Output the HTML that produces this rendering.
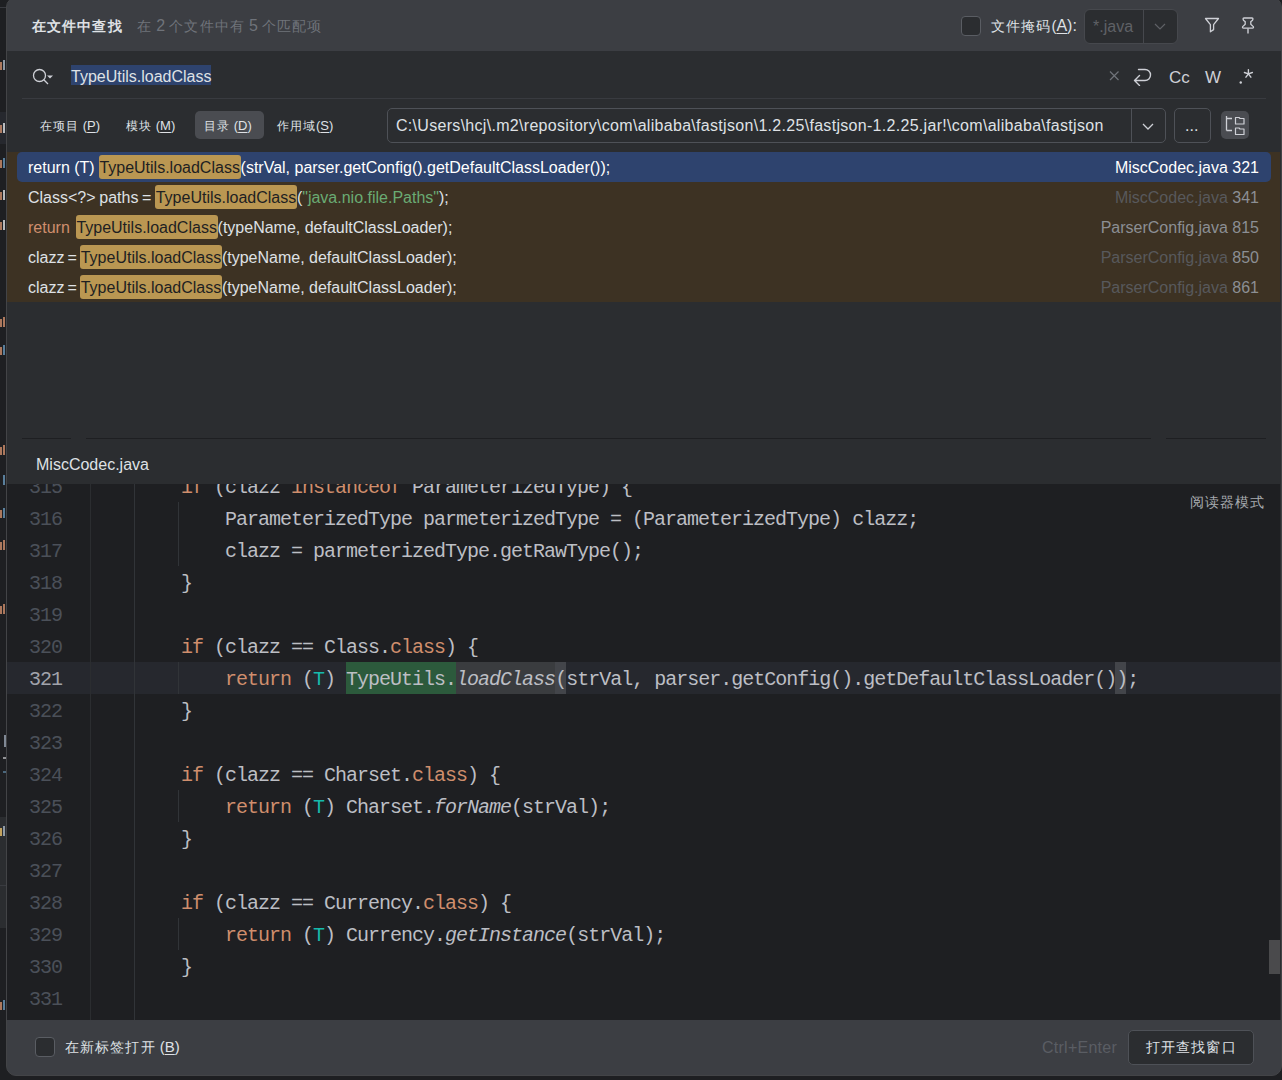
<!DOCTYPE html><html><head><meta charset="utf-8"><style>
*{box-sizing:border-box;margin:0;padding:0}
html,body{width:1282px;height:1080px;overflow:hidden;background:#1E1F22;font-family:"Liberation Sans",sans-serif;color:#DFE1E5}
.a{position:absolute}
.t{position:absolute;white-space:pre;font-size:16px;line-height:20px}
.cn{font-size:0.92em;letter-spacing:0.08em}
.code{position:absolute;left:137px;white-space:pre;font-family:"Liberation Mono",monospace;font-size:20px;letter-spacing:-1px;line-height:32px;height:32px;color:#BCBEC4;padding-top:2px}
.kw{color:#CF8E6D}
.tp{color:#16BAAC}
.it{font-style:italic}
.ln{position:absolute;left:20px;width:42px;text-align:right;white-space:pre;font-family:"Liberation Mono",monospace;font-size:20px;letter-spacing:-1px;line-height:32px;color:#4B5059;padding-top:2px}
.hl{background:#BA9752;color:#1E1F22;border-radius:3px;padding:4px 0.7px 2.7px}
.u{text-decoration:underline;text-underline-offset:2px}
.fn{position:absolute;right:23px;white-space:pre;font-size:16px;line-height:20px;text-align:right}
.gd{position:absolute;width:1px;background:#313438}
</style></head><body>
<div class="a" style="left:0;top:7px;width:7px;height:1px;background:#393B40"></div>
<div class="a" style="left:1281px;top:7px;width:1px;height:1px;background:#393B40"></div>
<div class="a" style="left:4px;top:735px;width:2px;height:12px;background:#A9B7C6;opacity:.7"></div>
<div class="a" style="left:3px;top:757px;width:3px;height:2px;background:#DFE1E5;opacity:.6"></div>
<div class="a" style="left:3px;top:771px;width:3px;height:2px;background:#6897BB;opacity:.6"></div>
<div class="a" style="left:0;top:112px;width:6px;height:32px;background:#26282E"></div>
<div class="a" style="left:0;top:817px;width:6px;height:111px;background:#2B2D30"></div>
<div class="a" style="left:0;top:885px;width:6px;height:1px;background:#393B40"></div>
<div class="a" style="left:0;top:62px;width:2px;height:8px;background:#CF8E6D;opacity:.8"></div>
<div class="a" style="left:3px;top:60px;width:2px;height:10px;background:#A9B7C6;opacity:.8"></div>
<div class="a" style="left:0;top:125px;width:2px;height:8px;background:#CF8E6D;opacity:.8"></div>
<div class="a" style="left:3px;top:123px;width:2px;height:10px;background:#DFE1E5;opacity:.8"></div>
<div class="a" style="left:0;top:160px;width:2px;height:8px;background:#CF8E6D;opacity:.8"></div>
<div class="a" style="left:3px;top:158px;width:2px;height:10px;background:#6897BB;opacity:.8"></div>
<div class="a" style="left:0;top:192px;width:2px;height:8px;background:#CF8E6D;opacity:.8"></div>
<div class="a" style="left:3px;top:190px;width:2px;height:10px;background:#DFE1E5;opacity:.8"></div>
<div class="a" style="left:0;top:222px;width:2px;height:8px;background:#CF8E6D;opacity:.8"></div>
<div class="a" style="left:3px;top:220px;width:2px;height:10px;background:#DFE1E5;opacity:.8"></div>
<div class="a" style="left:0;top:319px;width:2px;height:8px;background:#CF8E6D;opacity:.8"></div>
<div class="a" style="left:3px;top:317px;width:2px;height:10px;background:#CF8E6D;opacity:.8"></div>
<div class="a" style="left:0;top:347px;width:2px;height:8px;background:#CF8E6D;opacity:.8"></div>
<div class="a" style="left:3px;top:345px;width:2px;height:10px;background:#6897BB;opacity:.8"></div>
<div class="a" style="left:0;top:447px;width:2px;height:8px;background:#CF8E6D;opacity:.8"></div>
<div class="a" style="left:3px;top:445px;width:2px;height:10px;background:#CF8E6D;opacity:.8"></div>
<div class="a" style="left:3px;top:475px;width:2px;height:10px;background:#6897BB;opacity:.8"></div>
<div class="a" style="left:0;top:510px;width:2px;height:8px;background:#CF8E6D;opacity:.8"></div>
<div class="a" style="left:3px;top:508px;width:2px;height:10px;background:#6897BB;opacity:.8"></div>
<div class="a" style="left:0;top:542px;width:2px;height:8px;background:#CF8E6D;opacity:.8"></div>
<div class="a" style="left:3px;top:540px;width:2px;height:10px;background:#CF8E6D;opacity:.8"></div>
<div class="a" style="left:0;top:606px;width:2px;height:8px;background:#CF8E6D;opacity:.8"></div>
<div class="a" style="left:3px;top:604px;width:2px;height:10px;background:#CF8E6D;opacity:.8"></div>
<div class="a" style="left:0;top:828px;width:2px;height:8px;background:#E8BF6A;opacity:.8"></div>
<div class="a" style="left:3px;top:826px;width:2px;height:10px;background:#A9B7C6;opacity:.8"></div>
<div class="a" style="left:0;top:1002px;width:2px;height:8px;background:#CF8E6D;opacity:.8"></div>
<div class="a" style="left:3px;top:1000px;width:2px;height:10px;background:#6897BB;opacity:.8"></div>
<div class="a" style="left:6px;top:-3px;width:1276px;height:1079px;border-radius:10px;background:#3C3E43;border:1px solid #434447"></div>
<div class="a" style="left:7px;top:51px;width:1274px;height:969px;background:#2B2D30"></div>
<div class="t" style="left:32px;top:16px;font-weight:bold;font-size:15px"><span class="cn">在文件中查找</span></div>
<div class="t" style="left:137px;top:16px;color:#6F737A;font-size:15px"><span class="cn">在</span> <span style="font-size:16px">2</span> <span class="cn">个文件中有</span> <span style="font-size:16px">5</span> <span class="cn">个匹配项</span></div>
<div class="a" style="left:961px;top:16px;width:20px;height:20px;border-radius:4px;border:1px solid #5A5D63;background:#2B2D30"></div>
<div class="t" style="left:991px;top:16px;font-size:15px"><span class="cn">文件掩码</span>(<span class="u" style="font-size:16px">A</span><span style="font-size:16px">):</span></div>
<div class="a" style="left:1084px;top:9px;width:94px;height:35px;border-radius:6px;border:1px solid #46484D;background:#2B2D30"></div>
<div class="a" style="left:1143px;top:10px;width:1px;height:33px;background:#46484D"></div>
<div class="t" style="left:1093px;top:17px;color:#5F6166">*.java</div>
<svg class="a" style="left:1153px;top:22px" width="14" height="10"><path d="M2 2 L7 7 L12 2" stroke="#5F6166" stroke-width="1.2" fill="none"/></svg>
<svg class="a" style="left:1203px;top:16px" width="18" height="18"><path d="M2.5 2.5 H15.5 L10.6 8.7 V13.6 L7.4 15.8 V8.7 Z" stroke="#CED0D6" stroke-width="1.3" fill="none" stroke-linejoin="round"/></svg>
<svg class="a" style="left:1240px;top:14px" width="18" height="22"><path d="M4 4 H12 Q13 4 13 5 Q13 6.5 10.8 7.6 V10.2 L13.3 12.6 Q14 14.2 12.4 14.2 H3.6 Q2 14.2 2.7 12.6 L5.2 10.2 V7.6 Q3 6.5 3 5 Q3 4 4 4 Z" stroke="#CED0D6" stroke-width="1.3" fill="none" stroke-linejoin="round"/><path d="M8 14.5 V19.6" stroke="#CED0D6" stroke-width="1.4"/></svg>
<svg class="a" style="left:30px;top:64.5px" width="26" height="24"><circle cx="9.5" cy="10.5" r="6" stroke="#CED0D6" stroke-width="1.3" fill="none"/><path d="M13.8 14.8 L18 19" stroke="#CED0D6" stroke-width="1.3"/><path d="M17 10.5 H23 L20 13.5 Z" fill="#CED0D6"/></svg>
<div class="a" style="left:71px;top:65px;width:140px;height:20px;background:#2E436E"></div>
<div class="t" style="left:71px;top:66.5px;color:#DFE1E5">TypeUtils.loadClass</div>
<svg class="a" style="left:1106px;top:68px" width="16" height="16"><path d="M4 3.5 L12.5 12 M12.5 3.5 L4 12" stroke="#6F737A" stroke-width="1.2"/></svg>
<svg class="a" style="left:1131px;top:66px" width="22" height="20"><path d="M7.5 3.5 H14 A5.5 5.5 0 0 1 14 14.5 H3.5 M8.5 9.5 L3.5 14.5 L8.5 19.5" stroke="#CED0D6" stroke-width="1.4" fill="none" stroke-linejoin="round" stroke-linecap="round"/></svg>
<div class="t" style="left:1169px;top:68px;color:#CED0D6;font-size:17px">Cc</div>
<div class="t" style="left:1205px;top:68px;color:#CED0D6;font-size:17px">W</div>
<svg class="a" style="left:1236px;top:66px" width="20" height="20"><circle cx="4.75" cy="16.5" r="1.2" fill="#CED0D6"/><path transform="translate(12.4 7.8)" d="M0 0 L0.00 -4.20 M0 0 L3.99 -1.30 M0 0 L2.47 3.40 M0 0 L-2.47 3.40 M0 0 L-3.99 -1.30" stroke="#CED0D6" stroke-width="1.4" stroke-linecap="round"/></svg>
<div class="a" style="left:22px;top:98px;width:1244px;height:1px;background:#393B40"></div>
<div class="t" style="left:40px;top:115.5px;font-size:13.5px"><span class="cn">在项目</span> <span style="font-size:13px">(<span class="u">P</span>)</span></div>
<div class="t" style="left:126px;top:115.5px;font-size:13.5px"><span class="cn">模块</span> <span style="font-size:13px">(<span class="u">M</span>)</span></div>
<div class="a" style="left:195px;top:111px;width:69px;height:28px;border-radius:5px;background:#4A4C51"></div>
<div class="t" style="left:204px;top:115.5px;font-size:13.5px"><span class="cn">目录</span> <span style="font-size:13px">(<span class="u">D</span>)</span></div>
<div class="t" style="left:277px;top:115.5px;font-size:13.5px"><span class="cn">作用域</span><span style="font-size:13px">(<span class="u">S</span>)</span></div>
<div class="a" style="left:387px;top:108px;width:779px;height:35px;border-radius:5px;border:1px solid #4E5157;background:#2B2D30"></div>
<div class="a" style="left:1131px;top:109px;width:1px;height:33px;background:#4E5157"></div>
<div class="t" style="left:396px;top:116px;letter-spacing:0.3px">C:\Users\hcj\.m2\repository\com\alibaba\fastjson\1.2.25\fastjson-1.2.25.jar!\com\alibaba\fastjson</div>
<svg class="a" style="left:1141px;top:121.5px" width="14" height="10"><path d="M2 2 L7 7 L12 2" stroke="#CED0D6" stroke-width="1.3" fill="none"/></svg>
<div class="a" style="left:1174px;top:108px;width:37px;height:35px;border-radius:5px;border:1px solid #4E5157;background:#2B2D30"></div>
<div class="t" style="left:1185px;top:116px">...</div>
<div class="a" style="left:1221px;top:111px;width:28px;height:28px;border-radius:5px;background:#4A4C51"></div>
<svg class="a" style="left:1221px;top:111px" width="28" height="28"><path d="M5.5 5 V19.5 M5.5 7.5 H11 M5.5 19.5 H11" stroke="#CED0D6" stroke-width="1.3" fill="none"/><path d="M14.5 6.5 H18 L19 7.5 H23 V13 H14.5 Z M14.5 17 H18 L19 18 H23 V23.5 H14.5 Z" stroke="#CED0D6" stroke-width="1.2" fill="none" stroke-linejoin="round"/></svg>
<div class="a" style="left:7px;top:152px;width:1273px;height:150px;background:#3D3223"></div>
<div class="a" style="left:17px;top:152px;width:1254px;height:30px;border-radius:5px;background:#2E436E"></div>
<div class="t" style="left:28px;top:158px;color:#FFFFFF"><span style="display:inline-block;width:70.7px;word-spacing:0px">return (T) </span><span class="hl">TypeUtils.loadClass</span>(strVal, parser.getConfig().getDefaultClassLoader());</div>
<div class="fn" style="top:158px;color:#FFFFFF">MiscCodec.java <span style="color:#FFFFFF">321</span></div>
<div class="t" style="left:28px;top:188px;color:#DFE1E5"><span style="display:inline-block;width:127px;word-spacing:-0.8px">Class&lt;?&gt; paths = </span><span class="hl">TypeUtils.loadClass</span>(<span style="color:#6AAB73">"java.nio.file.Paths"</span>);</div>
<div class="fn" style="top:188px;color:#58595C">MiscCodec.java <span style="color:#8C8F94">341</span></div>
<div class="t" style="left:28px;top:218px;color:#DFE1E5"><span style="display:inline-block;width:47.7px;word-spacing:0px"><span class="kw">return</span> </span><span class="hl">TypeUtils.loadClass</span>(typeName, defaultClassLoader);</div>
<div class="fn" style="top:218px;color:#8C8F94">ParserConfig.java <span style="color:#8C8F94">815</span></div>
<div class="t" style="left:28px;top:248px;color:#DFE1E5"><span style="display:inline-block;width:52px;word-spacing:-1.4px">clazz = </span><span class="hl">TypeUtils.loadClass</span>(typeName, defaultClassLoader);</div>
<div class="fn" style="top:248px;color:#58595C">ParserConfig.java <span style="color:#8C8F94">850</span></div>
<div class="t" style="left:28px;top:278px;color:#DFE1E5"><span style="display:inline-block;width:52px;word-spacing:-1.4px">clazz = </span><span class="hl">TypeUtils.loadClass</span>(typeName, defaultClassLoader);</div>
<div class="fn" style="top:278px;color:#58595C">ParserConfig.java <span style="color:#8C8F94">861</span></div>
<div class="a" style="left:22px;top:438px;width:49px;height:1px;background:#1E1F22"></div>
<div class="a" style="left:86px;top:438px;width:1065px;height:1px;background:#1E1F22"></div>
<div class="a" style="left:1166px;top:438px;width:100px;height:1px;background:#1E1F22"></div>
<div class="t" style="left:36px;top:455px">MiscCodec.java</div>
<div class="a" style="left:7px;top:484px;width:1273px;height:536px;background:#1E1F22;overflow:hidden">
<div class="a" style="left:0;top:178px;width:1273px;height:32px;background:#26282E"></div>
<div class="gd" style="left:83px;top:0;height:536px;background:#2B2D30"></div>
<div class="gd" style="left:127px;top:0;height:536px"></div>
<div class="gd" style="left:171px;top:18px;height:64px"></div>
<div class="gd" style="left:171px;top:178px;height:32px"></div>
<div class="gd" style="left:171px;top:306px;height:32px"></div>
<div class="gd" style="left:171px;top:434px;height:32px"></div>
<div class="a" style="left:339px;top:178px;width:110px;height:32px;background:#2C5A3C"></div>
<div class="a" style="left:449px;top:178px;width:99px;height:32px;background:#3A3C3F"></div>
<div class="a" style="left:548px;top:178px;width:11px;height:32px;background:#43454A"></div>
<div class="a" style="left:1108px;top:178px;width:11px;height:32px;background:#43454A"></div>
<div class="ln" style="top:-14px;left:13px;color:#4B5059">315</div>
<div class="code" style="top:-14px;left:130px">    <span class="kw">if</span> (clazz <span class="kw">instanceof</span> ParameterizedType) {</div>
<div class="ln" style="top:18px;left:13px;color:#4B5059">316</div>
<div class="code" style="top:18px;left:130px">        ParameterizedType parmeterizedType = (ParameterizedType) clazz;</div>
<div class="ln" style="top:50px;left:13px;color:#4B5059">317</div>
<div class="code" style="top:50px;left:130px">        clazz = parmeterizedType.getRawType();</div>
<div class="ln" style="top:82px;left:13px;color:#4B5059">318</div>
<div class="code" style="top:82px;left:130px">    }</div>
<div class="ln" style="top:114px;left:13px;color:#4B5059">319</div>
<div class="code" style="top:114px;left:130px"></div>
<div class="ln" style="top:146px;left:13px;color:#4B5059">320</div>
<div class="code" style="top:146px;left:130px">    <span class="kw">if</span> (clazz == Class.<span class="kw">class</span>) {</div>
<div class="ln" style="top:178px;left:13px;color:#A1A3AB">321</div>
<div class="code" style="top:178px;left:130px">        <span class="kw">return</span> (<span class="tp">T</span>) TypeUtils.<span class="it">loadClass</span>(strVal, parser.getConfig().getDefaultClassLoader());</div>
<div class="ln" style="top:210px;left:13px;color:#4B5059">322</div>
<div class="code" style="top:210px;left:130px">    }</div>
<div class="ln" style="top:242px;left:13px;color:#4B5059">323</div>
<div class="code" style="top:242px;left:130px"></div>
<div class="ln" style="top:274px;left:13px;color:#4B5059">324</div>
<div class="code" style="top:274px;left:130px">    <span class="kw">if</span> (clazz == Charset.<span class="kw">class</span>) {</div>
<div class="ln" style="top:306px;left:13px;color:#4B5059">325</div>
<div class="code" style="top:306px;left:130px">        <span class="kw">return</span> (<span class="tp">T</span>) Charset.<span class="it">forName</span>(strVal);</div>
<div class="ln" style="top:338px;left:13px;color:#4B5059">326</div>
<div class="code" style="top:338px;left:130px">    }</div>
<div class="ln" style="top:370px;left:13px;color:#4B5059">327</div>
<div class="code" style="top:370px;left:130px"></div>
<div class="ln" style="top:402px;left:13px;color:#4B5059">328</div>
<div class="code" style="top:402px;left:130px">    <span class="kw">if</span> (clazz == Currency.<span class="kw">class</span>) {</div>
<div class="ln" style="top:434px;left:13px;color:#4B5059">329</div>
<div class="code" style="top:434px;left:130px">        <span class="kw">return</span> (<span class="tp">T</span>) Currency.<span class="it">getInstance</span>(strVal);</div>
<div class="ln" style="top:466px;left:13px;color:#4B5059">330</div>
<div class="code" style="top:466px;left:130px">    }</div>
<div class="ln" style="top:498px;left:13px;color:#4B5059">331</div>
<div class="code" style="top:498px;left:130px"></div>
<div class="t" style="left:1183px;top:8px;color:#A8ABB0;font-size:15px"><span class="cn">阅读器模式</span></div>
<div class="a" style="left:1262px;top:456px;width:11px;height:34px;background:#4A4A4C"></div>
</div>
<div class="a" style="left:35px;top:1037px;width:20px;height:20px;border-radius:4px;border:1px solid #5A5D63;background:#2B2D30"></div>
<div class="t" style="left:65px;top:1037px;font-size:15px"><span class="cn">在新标签打开</span> <span style="font-size:15px">(<span class="u">B</span>)</span></div>
<div class="t" style="left:1042px;top:1038px;color:#5A5D63;letter-spacing:0.25px">Ctrl+Enter</div>
<div class="a" style="left:1128px;top:1030px;width:126px;height:35px;border-radius:5px;border:1px solid #4E5157;background:#2B2D30"></div>
<div class="t" style="left:1146px;top:1037px;font-size:15px"><span class="cn">打开查找窗口</span></div>
</body></html>
